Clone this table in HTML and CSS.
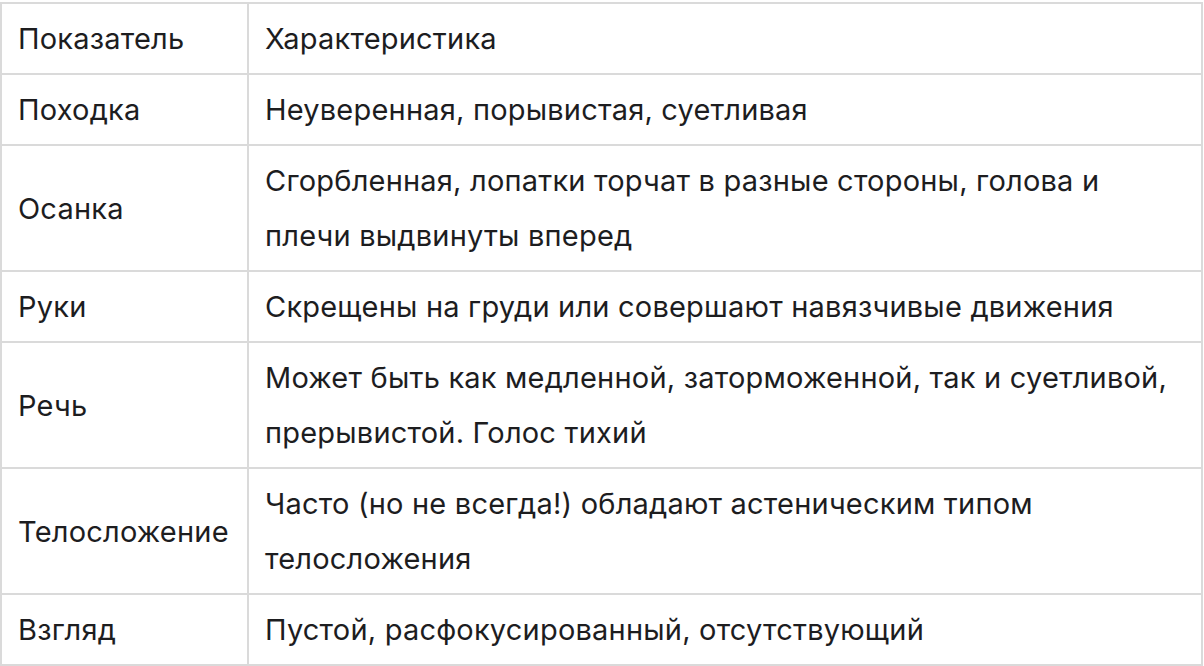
FILE: index.html
```html
<!DOCTYPE html>
<html lang="ru">
<head>
<meta charset="utf-8">
<link rel="stylesheet" href="styles.css">
</head>
<body>
<table class="tbl">
  <colgroup><col class="c1"><col class="c2"></colgroup>
  <tr><td>Показатель</td><td>Характеристика</td></tr>
  <tr><td>Походка</td><td>Неуверенная, порывистая, суетливая</td></tr>
  <tr><td>Осанка</td><td>Сгорбленная, лопатки торчат в разные стороны, голова и плечи выдвинуты вперед</td></tr>
  <tr><td>Руки</td><td>Скрещены на груди или совершают навязчивые движения</td></tr>
  <tr><td>Речь</td><td>Может быть как медленной, заторможенной, так и суетливой, прерывистой. Голос тихий</td></tr>
  <tr><td>Телосложение</td><td>Часто (но не всегда!) обладают астеническим типом телосложения</td></tr>
  <tr><td>Взгляд</td><td>Пустой, расфокусированный, отсутствующий</td></tr>
</table>
</body>
</html>
```
FILE: styles.css
```css
html, body {
  margin: 0;
  padding: 0;
  background: #ffffff;
}
body {
  padding-top: 2px;
  font-family: Inter, "Noto Sans", sans-serif;
  font-size: 29px;
  letter-spacing: 0.2px;
  color: #1d1d1f;
}
.tbl {
  border-collapse: collapse;
  width: 1203px;
  table-layout: fixed;
}
.c1 { width: 247px; }
.tbl td {
  border: 2px solid #dadada;
  padding: 7px 16px;
  line-height: 55px;
  vertical-align: middle;
  text-align: left;
}
```
